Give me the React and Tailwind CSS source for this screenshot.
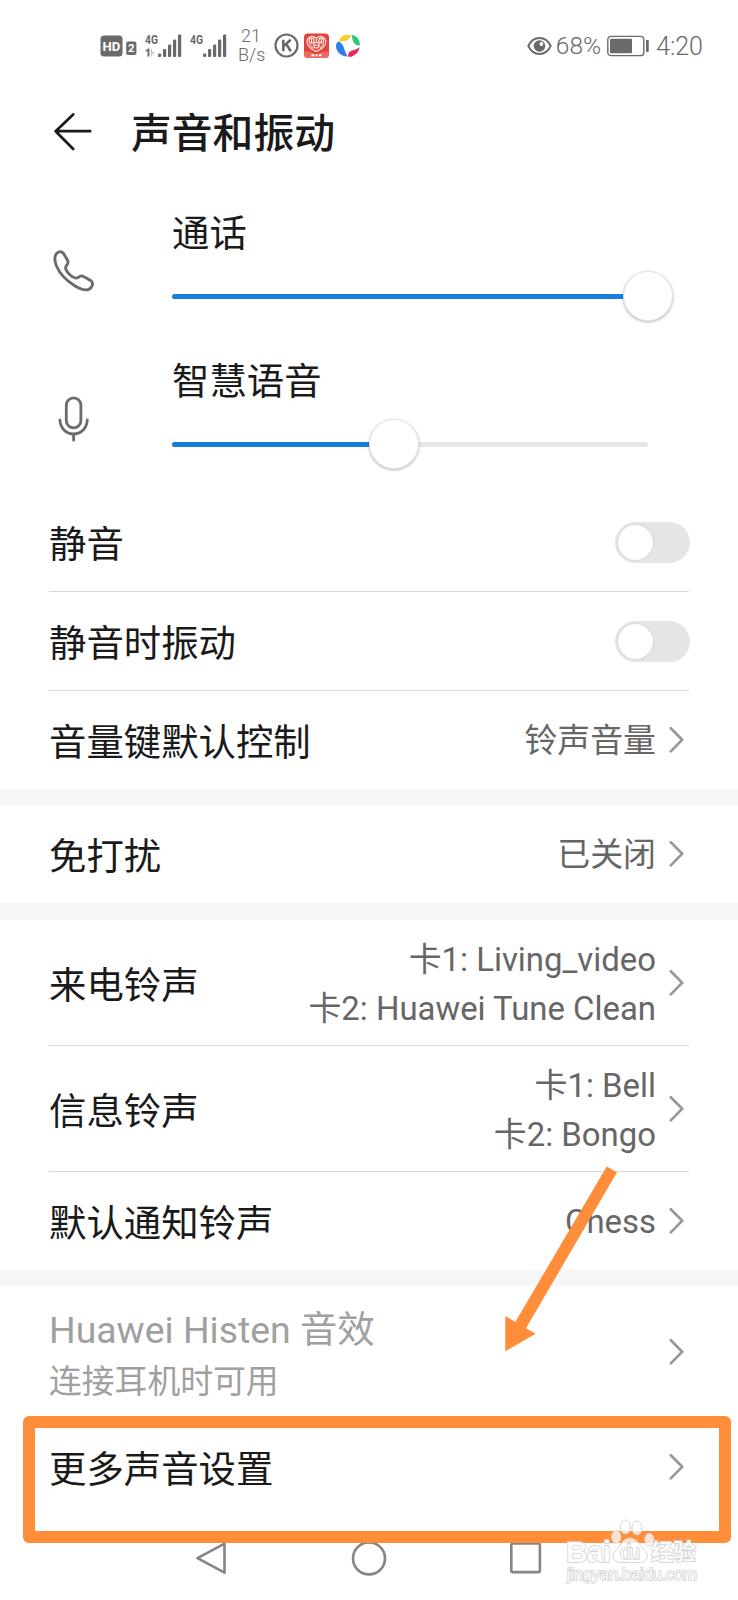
import React from "react";

const volumes = [
  { label: "通话", icon: "phone", value: 100 },
  { label: "智慧语音", icon: "mic", value: 46.7 },
];

const ChevronIcon = () => (
  <svg className="w-4 h-7 ml-3 mr-[5px] shrink-0" viewBox="0 0 16 28" fill="none">
    <path d="M2.8 2.2L14.2 13.8L2.8 25.4" stroke="#999999" strokeWidth="2.7" strokeLinecap="round" strokeLinejoin="round" />
  </svg>
);

const PhoneIcon = () => (
  <svg className="w-11 h-11" viewBox="0 0 44 44" fill="none" stroke="#6b6b6b" strokeWidth="2.9" strokeLinejoin="round">
    <path d="M3.4 6.4C5 2.8 9 1.6 11.3 4.2C13 6.8 14.7 9.5 16 12.3C16.8 14.2 14.2 16.3 13.6 18.2C13.4 22.4 19.4 28.5 24 29.1C26.3 29.2 28 26.3 30.3 27C33.6 28.4 36.6 30.1 39.2 32C41.7 34.3 40.4 38.4 36.7 40.4C33.6 41.7 28.4 40.2 22.7 36.8C14.5 31.7 7.5 24.3 4.4 16.8C3 13.2 2.4 9.2 3.4 6.4Z" />
  </svg>
);

const MicIcon = () => (
  <svg className="w-11 h-11 overflow-visible" viewBox="0 0 44 44" fill="none" stroke="#6b6b6b" strokeWidth="2.8" strokeLinecap="round">
    <rect x="14.3" y="0.8" width="14.6" height="30" rx="7.3" />
    <path d="M7.9 23C8.3 31 14 37 21.6 37S34.9 31 35.3 23M21.6 37V43.2" />
  </svg>
);

// Signal strength with the network type in the top left corner
const Signal = ({ data }) => (
  <svg className="w-[38px] h-[30px] shrink-0" viewBox="0 -3 38 30" fill="#6a6a6a">
    <text x="0" y="10.4" fontFamily="Roboto" fontSize="13.5" fontWeight="700" textLength="13" lengthAdjust="spacingAndGlyphs">4G</text>
    {data && (
      <>
        <path d="M0.6 16.2L3.4 14.4H4.4V22.6H2.5V17L0.6 17.8Z" />
        <path d="M6.5 15V22.5M6.5 20.5L9 18" stroke="#c4c4c4" strokeWidth="1.3" />
      </>
    )}
    <rect x="13" y="19.5" width="3.2" height="3.5" rx="1" />
    <rect x="18" y="15" width="3.2" height="8" rx="1" />
    <rect x="23" y="10.5" width="3.2" height="12.5" rx="1" />
    <rect x="28" y="5.5" width="3.2" height="17.5" rx="1" />
    <rect x="33" y="0.5" width="3.2" height="22.5" rx="1" />
  </svg>
);

const StatusBar = () => (
  <div className="h-[90px] pl-[100px] pr-[35px] pt-px flex items-center justify-between text-[#6a6a6a]">
    <div className="flex items-center">
      <svg className="w-[38px] h-6 shrink-0" viewBox="0 0 38 24">
        <rect x="0.5" y="1.5" width="22" height="21" rx="3.5" fill="#6a6a6a" />
        <text x="2.6" y="16.7" fontFamily="Roboto" fontSize="13.5" fontWeight="700" fill="#fff" textLength="17.8" lengthAdjust="spacingAndGlyphs">HD</text>
        <rect x="26.2" y="7.6" width="10.2" height="13.4" rx="1.8" fill="#6a6a6a" />
        <text x="28" y="18.4" fontFamily="Roboto" fontSize="11.5" fontWeight="700" fill="#fff">2</text>
      </svg>
      <div className="w-[7px]" />
      <Signal data />
      <div className="w-[7px]" />
      <Signal />
      <div className="w-[26px] ml-[10px] mr-[10px] pb-px text-[18px] leading-[19px] font-light text-center">
        <div>21</div>
        <div>B/s</div>
      </div>
      <svg className="w-[25px] h-[25px] shrink-0" viewBox="0 0 25 25" fill="none" stroke="#6a6a6a">
        <circle cx="12.5" cy="12.5" r="11" strokeWidth="2.2" />
        <path d="M9.3 6.8V18.2M16.6 6.8L10 12.9M12.2 10.9L16.8 18.2" strokeWidth="2.6" />
      </svg>
      <svg className="w-[25px] h-[25px] ml-[5px] shrink-0" viewBox="0 0 25 25">
        <rect x="0" y="0.5" width="25" height="24.5" rx="4" fill="#e0443c" />
        <path d="M0 18.5H5L12.5 21.5L20 18.5H25V21Q25 25 21 25H4Q0 25 0 21Z" fill="#ef695f" />
        <g fill="none" stroke="#ffe9e4" strokeWidth="1.1">
          <path d="M12.3 5.5C8 1.2 2.6 4.4 3 9C3.2 13 7.5 16.5 12.3 18.5C17.3 16.5 21.6 13 21.8 9C22 4.4 16.6 1.2 12.3 5.5Z" />
          <circle cx="7.5" cy="7.6" r="2.5" />
          <circle cx="17.2" cy="7.6" r="2.5" />
          <circle cx="12.4" cy="12.2" r="2.8" />
          <path d="M5 10.5L9 15.5M20 10.5L16 15.5M12.4 5V9M9.8 12.2H15M7.5 5V10M17.2 5V10" />
        </g>
        <path d="M7.5 22.3H10.5M11.8 22.3H13.5M15 22.3H17.5" stroke="#fff" strokeWidth="1.9" />
      </svg>
      <svg className="w-[26px] h-[26px] ml-[6px] shrink-0" viewBox="0 0 26 26">
        <path d="M4 7.5C6 2.8 11 0.6 15.6 2.2C16 5.8 12 7.8 8.4 8C6.3 8.2 4.8 8.6 3.6 10Z" fill="#f8cf2c" />
        <path d="M16.5 2C21.7 2.3 25.2 7.1 24.9 12.2C21 13.4 18.8 10.5 17.9 7.3C17.3 5.2 16.6 4.2 16.5 2Z" fill="#2dc878" />
        <path d="M24.5 14C24.2 19.5 18.8 24.4 13.2 23.8C12.2 20.4 15 18 18 17.2C20.5 16.6 22.8 16 24.5 14Z" fill="#e8275c" />
        <path d="M2.6 8.8C6 8.7 8.2 12 9 15C9.6 17.5 11 20 12.5 23.6C6.5 23.7 1.4 18.7 1 13.5C0.9 11.8 1.6 10 2.6 8.8Z" fill="#2c7df0" />
      </svg>
    </div>
    <div className="flex items-center">
      <svg className="w-[25px] h-5 shrink-0" viewBox="0 0 25 20">
        <path d="M1.3 10C6.5 -0.6 18.5 -0.6 23.7 10C18.5 20.6 6.5 20.6 1.3 10Z" fill="none" stroke="#6a6a6a" strokeWidth="1.9" />
        <circle cx="12.5" cy="10" r="5.8" fill="#6a6a6a" />
        <circle cx="14.4" cy="8" r="1.9" fill="#fff" />
      </svg>
      <span className="ml-1 pt-[2px] text-[24.5px] leading-none font-light">68%</span>
      <svg className="w-[42px] h-[22px] ml-[6px] shrink-0" viewBox="0 0 42 22">
        <rect x="0.8" y="1.4" width="36" height="19.2" rx="3.2" fill="none" stroke="#6a6a6a" strokeWidth="1.4" />
        <rect x="3" y="3.8" width="22" height="14.4" rx="1" fill="#6a6a6a" />
        <rect x="39" y="5" width="2.8" height="12" rx="1" fill="#6a6a6a" />
      </svg>
      <span className="ml-[7px] pt-[2px] text-[25px] leading-none font-light">4:20</span>
    </div>
  </div>
);

const VolumeRow = ({ label, icon, value }) => (
  <div className="h-[148px] pl-[52px] pr-[90px] flex">
    <div className="w-[120px] flex items-center">{icon === "phone" ? <PhoneIcon /> : <MicIcon />}</div>
    <div className="flex-1 pt-[10px]">
      <div className="h-[54px] leading-[54px]">{label}</div>
      <div className="relative h-[50px] mt-[10px] flex items-center">
        <div className="w-full h-[5px] rounded-full bg-[#e7e7e7]">
          <div className="h-full rounded-full bg-[#197cdc]" style={{ width: `${value}%` }} />
        </div>
        <div
          className="absolute top-0 w-[50px] h-[50px] -ml-[25px] rounded-full bg-white border border-[#e6e6e6] shadow-[0_1px_3px_rgba(0,0,0,0.3)]"
          style={{ left: `${value}%` }}
        />
      </div>
    </div>
  </div>
);

const Toggle = () => (
  <div className="w-[75px] h-[41px] -mr-px p-[3px] rounded-full bg-[#e5e5e5]">
    <div className="w-[35px] h-[35px] rounded-full bg-white shadow-[0_0_2px_rgba(0,0,0,0.15)]" />
  </div>
);

// One settings line: label on the left, a toggle or a value with a chevron on the right
const Row = ({ label, values = [], toggle, tall, divider }) => (
  <div className="px-[49px]">
    <div
      className={`flex items-center justify-between ${tall ? "h-[125px]" : "h-[98px]"} ${
        divider ? "border-b border-[#d9d9d9] box-content" : ""
      }`}
    >
      <span className="pt-[6px]">{label}</span>
      {toggle ? (
        <Toggle />
      ) : (
        <div className="flex items-center text-[32.9px] leading-[49px] text-[#666666]">
          <div className={`text-right ${tall ? "pt-[3px]" : "pt-px"}`}>
            {values.map((v) => (
              <div key={v}>{v}</div>
            ))}
          </div>
          <ChevronIcon />
        </div>
      )}
    </div>
  </div>
);

const Gap = () => <div className="h-4 bg-[#f6f6f6]" />;

const Watermark = () => (
  <svg className="absolute left-[560px] top-[1515px] w-[145px] h-[75px]" viewBox="0 0 145 75">
    <g fill="#ffffff" fillOpacity="0.75" stroke="#d6d6d6" strokeWidth="1">
      <ellipse cx="65.5" cy="12" rx="5" ry="7" />
      <ellipse cx="77" cy="13" rx="5" ry="7" />
      <ellipse cx="56.3" cy="22" rx="4.6" ry="6.5" />
      <ellipse cx="89.3" cy="24.5" rx="4.6" ry="6.2" />
      <path d="M70 23C77 23 79 30 84 34C91 41 86 48 79 47.5H61C54 48 50 41 56 35C62 30 62 23 70 23Z" />
    </g>
    <g fill="#ffffff" fillOpacity="0.9" stroke="#cfcfcf" strokeWidth="1.4" paintOrder="stroke">
      <text x="6" y="47" fontFamily="Liberation Sans" fontWeight="700" fontSize="30" textLength="45">Bai</text>
      <text x="60" y="44" fontFamily="Liberation Sans" fontSize="20" textLength="20">du</text>
      <text x="91" y="45" fontFamily="Noto Sans CJK SC" fontWeight="700" fontSize="22.5">经验</text>
      <text x="7" y="65" fontFamily="Liberation Sans" fontSize="17" textLength="130">jingyan.baidu.com</text>
    </g>
  </svg>
);

export default function App() {
  return (
    <div className="relative w-[738px] h-[1600px] overflow-hidden bg-white text-[#1a1a1a] text-[37.4px] leading-[54px] font-[Roboto,'Noto_Sans_CJK_SC',sans-serif]">
      <StatusBar />
      <div className="h-[107px] pl-[54px] pb-[24px] flex items-center">
        <svg className="w-[38px] h-[38px] shrink-0" viewBox="0 0 38 38" fill="none" stroke="#1a1a1a" strokeWidth="2.7" strokeLinecap="round" strokeLinejoin="round">
          <path d="M36.2 18.2H1.6M19.2 1.4L1.6 18.2L19.2 36" />
        </svg>
        <h1 className="ml-[39px] pt-[5px] text-[40.8px] font-medium">声音和振动</h1>
      </div>

      {volumes.map((v) => (
        <VolumeRow key={v.label} {...v} />
      ))}

      <Row label="静音" toggle divider />
      <Row label="静音时振动" toggle divider />
      <Row label="音量键默认控制" values={["铃声音量"]} />
      <Gap />
      <Row label="免打扰" values={["已关闭"]} />
      <div className="h-[17px] bg-[#f6f6f6]" />
      <Row label="来电铃声" values={["卡1: Living_video", "卡2: Huawei Tune Clean"]} tall divider />
      <Row label="信息铃声" values={["卡1: Bell", "卡2: Bongo"]} tall divider />
      <Row label="默认通知铃声" values={["Chess"]} />
      <Gap />
      <div className="h-[132px] px-[49px] flex items-center justify-between text-[#a0a0a0]">
        <div className="pt-[5px]">
          <div>Huawei Histen 音效</div>
          <div className="text-[32.8px] leading-[50px]">连接耳机时可用</div>
        </div>
        <ChevronIcon />
      </div>
      <Row label="更多声音设置" />

      <div className="h-[83px] px-[196px] pt-[26px] flex justify-between">
        <svg className="w-8 h-8" viewBox="0 0 32 32" fill="none" stroke="#858585" strokeWidth="2.6" strokeLinejoin="round">
          <path d="M28.5 1.7V30.7L1.5 16.2Z" />
        </svg>
        <svg className="w-9 h-9" viewBox="0 0 36 36" fill="none" stroke="#858585" strokeWidth="2.6">
          <circle cx="18" cy="16.4" r="16" />
        </svg>
        <svg className="w-8 h-8" viewBox="0 0 32 32" fill="none" stroke="#858585" strokeWidth="2.6">
          <rect x="1.3" y="1.5" width="28.6" height="28.6" rx="1.5" />
        </svg>
      </div>

      {/* highlight frame and arrow */}
      <div className="absolute left-[23px] top-[1416px] w-[708px] h-[127px] border-[12px] border-[#ff8d3a] rounded-[6px]" />
      <svg className="absolute left-[500px] top-[1160px] w-[125px] h-[200px]" viewBox="500 1160 125 200" fill="#ff8d3a">
        <path d="M606.7 1166.5L617 1172.3L526 1328.3L535.7 1333.7L505.3 1351.3V1316L515.3 1322Z" />
      </svg>
      <Watermark />
    </div>
  );
}
